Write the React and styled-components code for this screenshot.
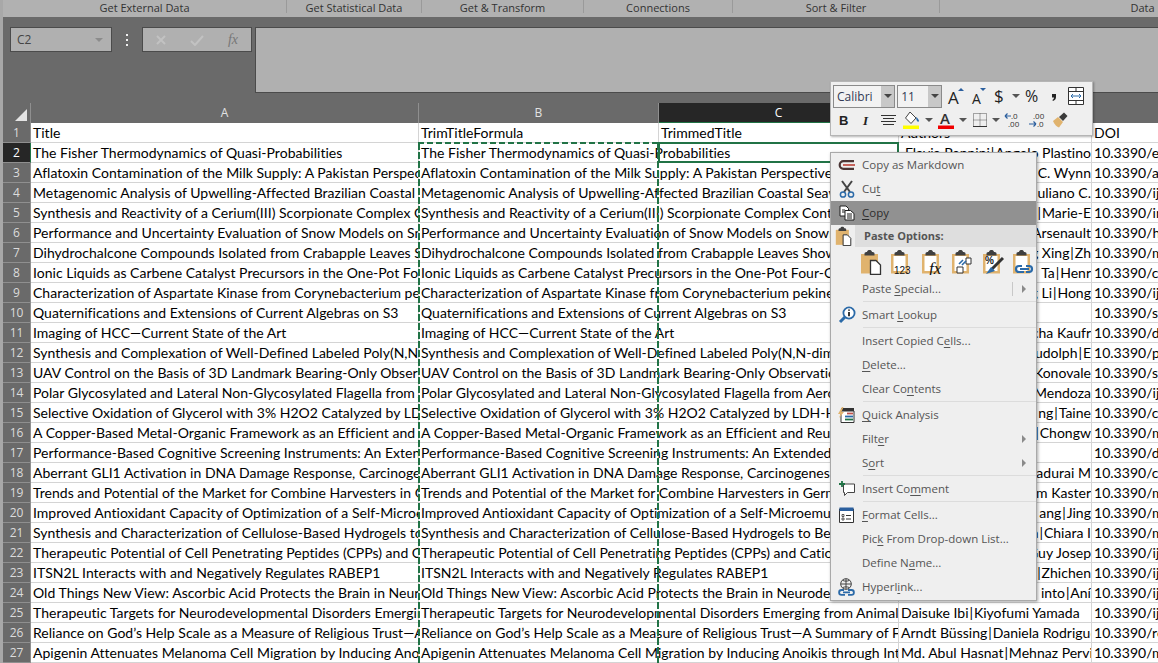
import React from 'react';
import styled, { createGlobalStyle } from 'styled-components';

const GlobalStyle = createGlobalStyle`
  html, body { margin: 0; padding: 0; background: #6a6a6a; overflow: hidden; }
`;

const COLUMNS = '28px 388px 240px 240px 193px 420px';

const Page = styled.div`
  width: 1158px;
  height: 663px;
  overflow: hidden;
  box-sizing: border-box;
  border-left: 3px solid #a8a8a8;
  background: #6a6a6a;
  display: flex;
  flex-direction: column;
  font-family: 'Lato', 'Liberation Sans', sans-serif;
  position: relative;
`;

const RibbonFoot = styled.div`
  height: 17px;
  flex: none;
  background: #b1b1b1;
  display: flex;
`;

const RibbonGroup = styled.div`
  width: ${(p) => p.$w}px;
  flex: none;
  height: 13px;
  box-sizing: border-box;
  border-right: 1px solid #9a9a9a;
  font: 11px/16px 'Open Sans', sans-serif;
  color: #333;
  text-align: center;
  white-space: nowrap;
`;

const FormulaBar = styled.div`
  height: 86px;
  flex: none;
  box-sizing: border-box;
  padding-top: 10px;
  padding-left: 7px;
  display: flex;
  align-items: flex-start;
`;

const NameBox = styled.div`
  width: 102px;
  height: 25px;
  box-sizing: border-box;
  border: 1px solid #4b4b4b;
  background: #b0b0b0;
  display: flex;
  align-items: center;
  justify-content: space-between;
  padding: 0 8px 0 6px;
  font: 12px 'Open Sans', sans-serif;
  color: #444;
`;

const Caret = styled.span`
  width: 0;
  height: 0;
  border-left: 4px solid transparent;
  border-right: 4px solid transparent;
  border-top: 4px solid ${(p) => p.$color || '#8c8c8c'};
  flex: none;
`;

const Dots = styled.div`
  width: 30px;
  height: 25px;
  display: flex;
  flex-direction: column;
  align-items: center;
  justify-content: center;
  gap: 3px;
  span {
    width: 2px;
    height: 2px;
    background: #f0f0f0;
  }
`;

const FxBox = styled.div`
  width: 110px;
  height: 25px;
  box-sizing: border-box;
  border: 1px solid #4b4b4b;
  background: #b0b0b0;
  display: flex;
  align-items: center;
  justify-content: space-between;
  padding: 0 13px 0 12px;
`;

const Fx = styled.i`
  font: italic 14px 'Liberation Serif', serif;
  color: #777;
`;

const FormulaInput = styled.div`
  flex: 1;
  margin-left: 3px;
  height: 66px;
  box-sizing: border-box;
  border: 1px solid #4b4b4b;
  border-right: 0;
  background: #b0b0b0;
`;

const Sheet = styled.div`
  position: relative;
  flex: 1;
  min-height: 0;
`;

const HeaderRow = styled.div`
  display: grid;
  grid-template-columns: ${COLUMNS};
  height: 20px;
`;

const Corner = styled.div`
  position: relative;
  border-right: 1px solid #8f8f8f;
  &::after {
    content: '';
    position: absolute;
    right: 3px;
    bottom: 3px;
    width: 0;
    height: 0;
    border-left: 12px solid transparent;
    border-bottom: 12px solid #e4e4e4;
  }
`;

const ColHead = styled.div`
  box-sizing: border-box;
  border-right: 1px solid #8f8f8f;
  border-bottom: ${(p) => (p.$active ? '2px solid #217346' : '1px solid #8f8f8f')};
  background: ${(p) => (p.$active ? '#262626' : '#6a6a6a')};
  color: ${(p) => (p.$active ? '#fff' : '#e2e2e2')};
  font: 12px/19px 'Open Sans', sans-serif;
  text-align: center;
`;

const Row = styled.div`
  display: grid;
  grid-template-columns: ${COLUMNS};
  height: 20px;
`;

const RowHead = styled.div`
  box-sizing: border-box;
  border-bottom: 1px solid #8f8f8f;
  border-right: ${(p) => (p.$active ? '1px solid #217346' : '1px solid #8f8f8f')};
  background: ${(p) => (p.$active ? '#262626' : '#6a6a6a')};
  color: ${(p) => (p.$active ? '#fff' : '#dcdcdc')};
  font: 12px/19px 'Open Sans', sans-serif;
  text-align: center;
`;

const Cell = styled.div`
  grid-column: span ${(p) => p.$span || 1};
  box-sizing: border-box;
  background: #fff;
  border-right: 1px solid #d4d4d4;
  border-bottom: 1px solid #d4d4d4;
  padding: 0 0 0 2px;
  overflow: hidden;
  white-space: nowrap;
  display: flex;
  justify-content: ${(p) => (p.$tail ? 'flex-end' : 'flex-start')};
  font-size: 14px;
  line-height: 19px;
  letter-spacing: 0.02px;
  color: #000;
`;

const MarqueeV = styled.div`
  position: absolute;
  top: 40px;
  bottom: 0;
  left: ${(p) => p.$x}px;
  width: 2px;
  background: repeating-linear-gradient(180deg, #217346 0 7px, transparent 7px 9px);
`;

const MarqueeH = styled.div`
  position: absolute;
  top: 39px;
  left: 415px;
  width: 240px;
  height: 2px;
  background: repeating-linear-gradient(90deg, #217346 0 6px, transparent 6px 9px);
`;

const ActiveCell = styled.div`
  position: absolute;
  top: 39px;
  left: 655px;
  width: 241px;
  height: 21px;
  box-sizing: border-box;
  border: 2px solid #217346;
`;

const MiniBar = styled.div`
  position: absolute;
  left: 827px;
  top: 81px;
  width: 263px;
  height: 55px;
  box-sizing: border-box;
  background: #efefef;
  border: 1px solid #b5b5b5;
  box-shadow: 1px 1px 2px rgba(0, 0, 0, 0.3);
  padding: 2px;
  display: flex;
  flex-direction: column;
  z-index: 2;
`;

const MiniRow = styled.div`
  display: flex;
  align-items: center;
  height: ${(p) => p.$h}px;
`;

const Combo = styled.div`
  width: ${(p) => p.$w}px;
  height: 23px;
  box-sizing: border-box;
  border: 1px solid #8a8a8a;
  background: #f2f2f2;
  display: flex;
  align-items: center;
  justify-content: space-between;
  margin-right: 2px;
  font: 12px 'Open Sans', sans-serif;
  color: #333a55;
  padding-left: 3px;
`;

const ComboButton = styled.span`
  width: 13px;
  height: 100%;
  background: #c8c8c8;
  display: flex;
  align-items: center;
  justify-content: center;
`;

const ToolSlot = styled.span`
  width: ${(p) => p.$w}px;
  height: 24px;
  flex: none;
  display: flex;
  align-items: center;
  justify-content: center;
`;

const Menu = styled.div`
  position: absolute;
  left: 827px;
  top: 152px;
  width: 207px;
  height: 449px;
  box-sizing: border-box;
  background: #efefef;
  border: 1px solid #a9a9a9;
  box-shadow: 1px 1px 3px rgba(0, 0, 0, 0.35);
  z-index: 3;
  font: 11.5px 'Open Sans', sans-serif;
  color: #555;
`;

const MenuRow = styled.div`
  height: 24px;
  display: flex;
  align-items: center;
  position: relative;
  background: ${(p) => (p.$hot ? '#919191' : 'transparent')};
  color: ${(p) => (p.$hot ? '#2d2d2d' : 'inherit')};
  u {
    text-decoration-thickness: 1px;
    text-underline-offset: 2px;
  }
`;

const MenuLabel = styled.span`
  margin-bottom: 2px;
`;

const MenuIcon = styled.span`
  width: ${(p) => p.$w || 31}px;
  height: 24px;
  flex: none;
  display: flex;
  align-items: center;
  justify-content: center;
`;

const Sep = styled.div`
  height: 2px;
  margin-left: 32px;
  box-sizing: border-box;
  border-top: 1px solid #dcdcdc;
`;

const PasteHead = styled.div`
  height: 22px;
  display: flex;
  align-items: center;
  b {
    flex: 1;
    align-self: stretch;
    background: #dedede;
    padding-left: 9px;
    line-height: 21px;
    font-size: 11px;
    font-weight: 700;
    color: #555;
  }
`;

const PasteIcons = styled.div`
  height: 28px;
  display: flex;
  align-items: flex-start;
  padding: 2px 0 0 29px;
  gap: 8.4px;
`;

const Arrow = styled.span`
  position: absolute;
  right: 10px;
  top: 8px;
  width: 0;
  height: 0;
  border-top: 4px solid transparent;
  border-bottom: 4px solid transparent;
  border-left: 4px solid #8a8a8a;
`;

const SplitLine = styled.span`
  position: absolute;
  right: 23px;
  top: 5px;
  height: 14px;
  width: 1px;
  background: #c8c8c8;
`;

// Clipboard used by the paste row and the paste-options heading
const Board = ({ children, solid, w = 22, h = 26 }) => (
  <svg width={w} height={h} viewBox="0 0 22 26">
    <path d="M1 5h17v19.500H1z" fill="#e0b36e" />
    {!solid && <path d="M3.500 7h12v15h-12z" fill="#fff" />}
    <path d="M4.500 6.500V4.500c0-1 1-1.500 2.500-1.500C7.300 1.600 8.300 1 9.500 1s2.200.6 2.500 2c1.500 0 2.500.5 2.500 1.500v2z" fill="#3f3f3f" />
    {children}
  </svg>
);

const Sheet2 = () => (
  <path d="M10.500 11.500h5.500l4.500 4.500v9.500h-10z" fill="#fff" stroke="#333" strokeWidth="1.300" />
);

const Stroke = ({ children, w = 16, h = 16 }) => (
  <svg width={w} height={h} viewBox={`0 0 ${w} ${h}`}>{children}</svg>
);

const ICONS = {
  markdown: (
    <Stroke w={20} h={12}>
      <path d="M17 2.200H6.500a3.800 3.800 0 0 0 0 7.600H17" fill="none" stroke="#4a3535" strokeWidth="2.200" />
      <path d="M6 6h12" stroke="#c0524a" strokeWidth="1.800" />
    </Stroke>
  ),
  cut: (
    <Stroke w={16} h={18}>
      <path d="M3 1l8 11M13 1L5 12" stroke="#444" strokeWidth="2" fill="none" />
      <circle cx="4" cy="14.500" r="2.600" fill="none" stroke="#2b6aa8" strokeWidth="1.500" />
      <circle cx="12" cy="14.500" r="2.600" fill="none" stroke="#2b6aa8" strokeWidth="1.500" />
    </Stroke>
  ),
  copy: (
    <Stroke w={16} h={16}>
      <path d="M1 1h6l2.500 2.500V11H1z" fill="#fff" stroke="#1e1e1e" />
      <path d="M3 5h3M3 7h3" stroke="#1e1e1e" />
      <path d="M6 5.500h5.500l3.500 3V15H6z" fill="#fff" stroke="#1e1e1e" />
      <path d="M8 9h5M8 11h5M8 13h5" stroke="#1e1e1e" />
    </Stroke>
  ),
  lookup: (
    <Stroke w={18} h={18}>
      <circle cx="11" cy="7" r="5.600" fill="#fff" stroke="#2b6aa8" strokeWidth="1.800" />
      <path d="M7 11l-5 5" stroke="#2b6aa8" strokeWidth="3" />
      <path d="M11 6v4.200M11 3.400v1.400" stroke="#222" strokeWidth="1.800" />
    </Stroke>
  ),
  quick: (
    <Stroke w={17} h={16}>
      <path d="M3 4h13v11.500H3z" fill="#fff" stroke="#333" />
      <path d="M3 1h13v3H3z" fill="#333" />
      <path d="M9 6.500h6" stroke="#c0524a" strokeWidth="1.800" />
      <path d="M7 9.500h8" stroke="#2b6aa8" strokeWidth="1.800" />
      <path d="M7 12.500h8" stroke="#217346" strokeWidth="1.800" />
      <path d="M4 0L0 7h2.500L1 11l5-6H3.500L5.500 0z" fill="#e0b36e" />
    </Stroke>
  ),
  comment: (
    <Stroke w={16} h={16}>
      <path d="M4.500 3h11v8.500H8.500L5.500 14.500v-3h-1z" fill="#fff" stroke="#444" />
      <path d="M3 0v6M0 3h6" stroke="#217346" strokeWidth="1.800" />
    </Stroke>
  ),
  format: (
    <Stroke w={15} h={16}>
      <path d="M.5 2h14v13.500H.5z" fill="#fff" stroke="#333" />
      <path d="M.5 .5h14V4H.5z" fill="#2b5f9e" />
      <path d="M3 7.500h2v2H3zM3 11h2v2H3z" fill="none" stroke="#333" strokeWidth=".8" />
      <path d="M7 8.500h5M7 12h5" stroke="#333" />
    </Stroke>
  ),
  link: (
    <Stroke w={17} h={18}>
      <circle cx="8" cy="6" r="5.300" fill="none" stroke="#444" />
      <path d="M8 .7v10.600M2.700 6h10.600M4.600 2.400c2.200 1 4.600 1 6.800 0M4.600 9.600c2.200-1 4.600-1 6.800 0" fill="none" stroke="#444" />
      <path d="M6 12H3.500a2.400 2.400 0 0 0 0 4.800H7M10 12h3.500a2.400 2.400 0 0 1 0 4.800H10M5 14.400h7" fill="none" stroke="#2b6aa8" strokeWidth="1.800" />
    </Stroke>
  ),
};

const PASTE_BADGES = [
  <Sheet2 key="p" />,
  <text key="n" x="4" y="25" fontSize="10" fontFamily="'Liberation Sans', sans-serif" fill="#111">123</text>,
  <text key="f" x="8" y="25" fontSize="17" fontStyle="italic" fontFamily="'Liberation Serif', serif" fill="#111">fx</text>,
  <g key="t">
    <path d="M15 9h5v6h-5zM6 18h6v6H6z" fill="#fff" stroke="#333" />
    <path d="M8 15l4-4M11 16l4-4" stroke="#2b6aa8" strokeWidth="1.600" />
  </g>,
  <g key="b">
    <text x="3" y="15" fontSize="10" fontWeight="700" fontFamily="'Liberation Sans', sans-serif" fill="#222">%</text>
    <path d="M21 9L10 20" stroke="#333" strokeWidth="3" />
    <path d="M9 18l4 4-9 3z" fill="#2b6aa8" />
  </g>,
  <path key="l" d="M10 17H7a3 3 0 0 0 0 6h5M14 17h3a3 3 0 0 1 0 6h-3M8 20h9" fill="none" stroke="#2b6aa8" strokeWidth="2.200" />,
];

const ITEMS = [
  { key: 'md', icon: 'markdown', label: 'Copy as Markdown' },
  { key: 'cut', icon: 'cut', label: <>Cu<u>t</u></> },
  { key: 'copy', icon: 'copy', label: <><u>C</u>opy</>, hot: true },
  { key: 'paste', paste: true },
  { key: 'special', label: <>Paste <u>S</u>pecial...</>, arrow: true, split: true },
  { key: 's1', sep: true },
  { key: 'lookup', icon: 'lookup', label: <>Smart <u>L</u>ookup</> },
  { key: 's2', sep: true },
  { key: 'ins', label: <>Insert Copied C<u>e</u>lls...</> },
  { key: 'del', label: <><u>D</u>elete...</> },
  { key: 'clr', label: <>Clear Co<u>n</u>tents</> },
  { key: 's3', sep: true },
  { key: 'quick', icon: 'quick', label: <><u>Q</u>uick Analysis</> },
  { key: 'filter', label: <>Filt<u>e</u>r</>, arrow: true },
  { key: 'sort', label: <>S<u>o</u>rt</>, arrow: true },
  { key: 's4', sep: true },
  { key: 'comment', icon: 'comment', label: <>Insert Co<u>m</u>ment</> },
  { key: 's5', sep: true },
  { key: 'format', icon: 'format', label: <><u>F</u>ormat Cells...</> },
  { key: 'pick', label: <>Pic<u>k</u> From Drop-down List...</> },
  { key: 'name', label: <>Define N<u>a</u>me...</> },
  { key: 'link', icon: 'link', label: <>Hyperl<u>i</u>nk...</> },
];

const RIBBON = [
  ['Get External Data', 284],
  ['Get Statistical Data', 135],
  ['Get & Transform', 162],
  ['Connections', 149],
  ['Sort & Filter', 207],
  ['Data', 406],
];

// title, authors (only the end that shows past the menu unless left-aligned), doi
const ROWS = [
  ['The Fisher Thermodynamics of Quasi-Probabilities', 'Flavia Pennini|Angelo Plastino', '10.3390/e18'],
  ['Aflatoxin Contamination of the Milk Supply: A Pakistan Perspective', 'C. Wynn', '10.3390/agriculture'],
  ['Metagenomic Analysis of Upwelling-Affected Brazilian Coastal Seawater', 'uliano C. ', '10.3390/ijms'],
  ['Synthesis and Reactivity of a Cerium(III) Scorpionate Complex Containing', '|Marie-E', '10.3390/inorganics'],
  ['Performance and Uncertainty Evaluation of Snow Models on Snowmelt', 'Arsenault', '10.3390/hydrology'],
  ['Dihydrochalcone Compounds Isolated from Crabapple Leaves Showed', 'g Xing|Zh', '10.3390/molecules'],
  ['Ionic Liquids as Carbene Catalyst Precursors in the One-Pot Four-Component', 'Ta|Henr', '10.3390/catalysts'],
  ['Characterization of Aspartate Kinase from Corynebacterium pekinense', 'g Li|Hong', '10.3390/ijms'],
  ['Quaternifications and Extensions of Current Algebras on S3', '', '10.3390/symmetry'],
  ['Imaging of HCC—Current State of the Art', 'cha Kaufr', '10.3390/diagnostics'],
  ['Synthesis and Complexation of Well-Defined Labeled Poly(N,N-dimethylaminoethyl', 'udolph|E', '10.3390/polymers'],
  ['UAV Control on the Basis of 3D Landmark Bearing-Only Observations', 'Konovale', '10.3390/s15'],
  ['Polar Glycosylated and Lateral Non-Glycosylated Flagella from Aeromonas', 'Mendoza', '10.3390/ijms'],
  ['Selective Oxidation of Glycerol with 3% H2O2 Catalyzed by LDH-Hosted', 'ng|Taine', '10.3390/catalysts'],
  ['A Copper-Based Metal-Organic Framework as an Efficient and Reusable', '|Chongw', '10.3390/molecules'],
  ['Performance-Based Cognitive Screening Instruments: An Extended Analysis', '', '10.3390/diagnostics'],
  ['Aberrant GLI1 Activation in DNA Damage Response, Carcinogenesis and', 'nadurai M', '10.3390/cancers'],
  ['Trends and Potential of the Market for Combine Harvesters in Germany', 'm Kaster', '10.3390/machines'],
  ['Improved Antioxidant Capacity of Optimization of a Self-Microemulsifying', 'ang|Jing', '10.3390/molecules'],
  ['Synthesis and Characterization of Cellulose-Based Hydrogels to Be', 'a|Chiara I', '10.3390/materials'],
  ['Therapeutic Potential of Cell Penetrating Peptides (CPPs) and Cationic', 'Guy Josep', '10.3390/ijms'],
  ['ITSN2L Interacts with and Negatively Regulates RABEP1', '|Zhichen', '10.3390/ijms'],
  ['Old Things New View: Ascorbic Acid Protects the Brain in Neurodegenerative', 'into|Aní', '10.3390/ijms'],
  ['Therapeutic Targets for Neurodevelopmental Disorders Emerging from Animal Models', 'Daisuke Ibi|Kiyofumi Yamada', '10.3390/ijms', true],
  ['Reliance on God’s Help Scale as a Measure of Religious Trust—A Summary of Findings', 'Arndt Büssing|Daniela Rodrigues', '10.3390/religions', true],
  ['Apigenin Attenuates Melanoma Cell Migration by Inducing Anoikis through Integrin', 'Md. Abul Hasnat|Mehnaz Pervin', '10.3390/molecules', true],
];

function MiniToolbar() {
  return (
    <MiniBar>
      <MiniRow $h={24}>
        <Combo $w={64}>Calibri<ComboButton><Caret $color="#444" /></ComboButton></Combo>
        <Combo $w={46}>11<ComboButton><Caret $color="#444" /></ComboButton></Combo>
        <ToolSlot $w={24}>
          <Stroke w={18} h={18}>
            <text x="1" y="17" fontSize="17" fontFamily="'Open Sans', sans-serif" fill="#222">A</text>
            <path d="M11 4l3-3 3 3z" fill="#2b5f9e" />
          </Stroke>
        </ToolSlot>
        <ToolSlot $w={22}>
          <Stroke w={18} h={18}>
            <text x="2" y="17" fontSize="14" fontFamily="'Open Sans', sans-serif" fill="#222">A</text>
            <path d="M10 1h6l-3 3z" fill="#2b5f9e" />
          </Stroke>
        </ToolSlot>
        <ToolSlot $w={19}><Stroke w={14} h={18}><text x="1" y="15" fontSize="17" fontFamily="'Open Sans', sans-serif" fill="#222">$</text></Stroke></ToolSlot>
        <ToolSlot $w={13}><Caret $color="#555" /></ToolSlot>
        <ToolSlot $w={24}><Stroke w={18} h={18}><text x="0" y="15" fontSize="16" fontFamily="'Open Sans', sans-serif" fill="#222">%</text></Stroke></ToolSlot>
        <ToolSlot $w={16}><Stroke w={8} h={14}><path d="M2 5h4v3c0 2-1 3-3 4l-.6-.9C3.400 10.400 4 9.500 4 8.500H2z" fill="#222" /></Stroke></ToolSlot>
        <ToolSlot $w={28}>
          <Stroke w={16} h={18}>
            <path d="M.5.5h15v17H.500z" fill="#fff" stroke="#333" />
            <path d="M.5 4.500h15M.5 13.500h15M8 .5v4M8 13.500v4" stroke="#333" />
            <path d="M3 9h10M3 9l2-2M3 9l2 2M13 9l-2-2M13 9l-2 2" fill="none" stroke="#2b6aa8" />
          </Stroke>
        </ToolSlot>
      </MiniRow>
      <MiniRow $h={23}>
        <ToolSlot $w={22}><Stroke w={12} h={14}><text x="1" y="12" fontSize="13" fontWeight="700" fontFamily="'Liberation Sans', sans-serif" fill="#222">B</text></Stroke></ToolSlot>
        <ToolSlot $w={22}><Stroke w={12} h={14}><text x="3" y="12" fontSize="13" fontStyle="italic" fontWeight="700" fontFamily="'Liberation Serif', serif" fill="#222">I</text></Stroke></ToolSlot>
        <ToolSlot $w={22}><Stroke w={15} h={12}><path d="M0 1.500h15M2 4.500h11M0 7.500h15M2 10.500h11" stroke="#333" /></Stroke></ToolSlot>
        <ToolSlot $w={24}>
          <Stroke w={17} h={18}>
            <path d="M7 1l6 6-5 5.500L2.500 7z" fill="#fff" stroke="#444" />
            <path d="M13 6c2 1.500 3 3 3 4s-1.500 1-2 0-.8-2-1-4z" fill="#2b6aa8" />
            <path d="M0 14.500h16V18H0z" fill="#ffff00" />
          </Stroke>
        </ToolSlot>
        <ToolSlot $w={11}><Caret $color="#555" /></ToolSlot>
        <ToolSlot $w={24}>
          <Stroke w={16} h={18}>
            <text x="2" y="13" fontSize="15" fontFamily="'Open Sans', sans-serif" fontWeight="600" fill="#333">A</text>
            <path d="M0 14.500h16V18H0z" fill="#f00000" />
          </Stroke>
        </ToolSlot>
        <ToolSlot $w={10}><Caret $color="#555" /></ToolSlot>
        <ToolSlot $w={24}>
          <Stroke w={14} h={14}>
            <path d="M.5.500h13v13H.500z" fill="none" stroke="#555" strokeDasharray="1 1" />
            <path d="M7 .5v13M.5 7h13" stroke="#555" strokeDasharray="1 1" />
            <path d="M0 13.500h14" stroke="#333" />
          </Stroke>
        </ToolSlot>
        <ToolSlot $w={8}><Caret $color="#555" /></ToolSlot>
        <ToolSlot $w={26}>
          <Stroke w={18} h={16}>
            <text x="7" y="7" fontSize="8" fontFamily="'Open Sans', sans-serif" fill="#333">.0</text>
            <text x="4" y="15" fontSize="8" fontFamily="'Open Sans', sans-serif" fill="#333">.00</text>
            <path d="M1 4h6M1 4l2.500-2.500M1 4l2.500 2.500" fill="none" stroke="#2b5f9e" strokeWidth="1.200" />
          </Stroke>
        </ToolSlot>
        <ToolSlot $w={22}>
          <Stroke w={18} h={16}>
            <text x="5" y="7" fontSize="8" fontFamily="'Open Sans', sans-serif" fill="#333">.00</text>
            <text x="9" y="15" fontSize="8" fontFamily="'Open Sans', sans-serif" fill="#333">.0</text>
            <path d="M1 12h7M8 12l-2.500-2.500M8 12l-2.500 2.500" fill="none" stroke="#2b5f9e" strokeWidth="1.200" />
          </Stroke>
        </ToolSlot>
        <ToolSlot $w={24}>
          <Stroke w={16} h={16}>
            <path d="M1 9l5-4 5 5-4 5.500c-2-.5-4.500-3-6-6.500z" fill="#e0b36e" />
            <path d="M7 5l5-4.500 3.500 3.500L11 9z" fill="#3a3a3a" />
          </Stroke>
        </ToolSlot>
      </MiniRow>
    </MiniBar>
  );
}

function ContextMenu() {
  return (
    <Menu>
      {ITEMS.map((item) => {
        if (item.sep) return <Sep key={item.key} />;
        if (item.paste) {
          return (
            <React.Fragment key={item.key}>
              <PasteHead>
                <MenuIcon $w={24}><Board solid w={17} h={20}><Sheet2 /></Board></MenuIcon>
                <b>Paste Options:</b>
              </PasteHead>
              <PasteIcons>
                {PASTE_BADGES.map((badge, i) => <Board key={i} solid={i === 0}>{badge}</Board>)}
              </PasteIcons>
            </React.Fragment>
          );
        }
        return (
          <MenuRow key={item.key} $hot={item.hot}>
            <MenuIcon>{item.icon && ICONS[item.icon]}</MenuIcon>
            <MenuLabel>{item.label}</MenuLabel>
            {item.split && <SplitLine />}
            {item.arrow && <Arrow />}
          </MenuRow>
        );
      })}
    </Menu>
  );
}

const withBars = (text) => text.replace(/\|/g, '\u200a|\u200a');

function App() {
  return (
    <>
      <GlobalStyle />
      <Page>
        <RibbonFoot>
          {RIBBON.map(([label, w]) => <RibbonGroup key={label} $w={w}>{label}</RibbonGroup>)}
        </RibbonFoot>
        <FormulaBar>
          <NameBox>C2<Caret /></NameBox>
          <Dots><span /><span /><span /></Dots>
          <FxBox>
            <Stroke w={12} h={12}><path d="M2 2l8 8M10 2l-8 8" stroke="#c2c2c2" strokeWidth="2" /></Stroke>
            <Stroke w={14} h={12}><path d="M1 7l4 4 8-9" fill="none" stroke="#c2c2c2" strokeWidth="2" /></Stroke>
            <Fx>fx</Fx>
          </FxBox>
          <FormulaInput />
        </FormulaBar>
        <Sheet>
          <HeaderRow>
            <Corner />
            <ColHead>A</ColHead>
            <ColHead>B</ColHead>
            <ColHead $active>C</ColHead>
            <ColHead>D</ColHead>
            <ColHead>E</ColHead>
          </HeaderRow>
          <Row>
            <RowHead>1</RowHead>
            <Cell>Title</Cell>
            <Cell>TrimTitleFormula</Cell>
            <Cell>TrimmedTitle</Cell>
            <Cell>Authors</Cell>
            <Cell>DOI</Cell>
          </Row>
          {ROWS.map(([title, authors, doi, left], i) => (
            <Row key={i}>
              <RowHead $active={i === 0}>{i + 2}</RowHead>
              <Cell>{title}</Cell>
              <Cell $span={2}>{title}</Cell>
              <Cell $tail={!left}>{withBars(authors)}</Cell>
              <Cell>{doi}</Cell>
            </Row>
          ))}
          <MarqueeH />
          <MarqueeV $x={415} />
          <MarqueeV $x={654} />
          <ActiveCell />
        </Sheet>
        <MiniToolbar />
        <ContextMenu />
      </Page>
    </>
  );
}

export default App;
